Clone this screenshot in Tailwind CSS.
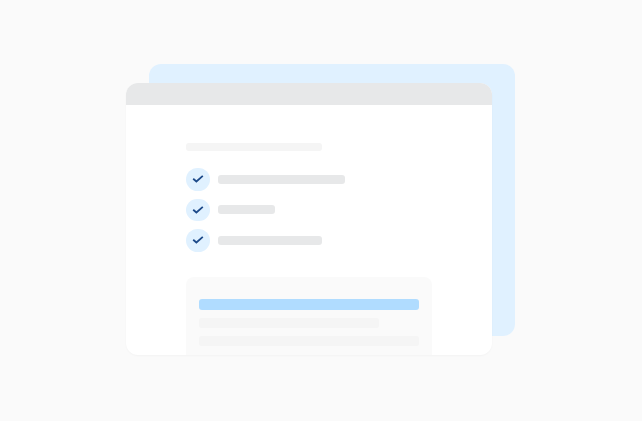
<!doctype html>
<html>
<head>
<meta charset="utf-8">
<script src="https://cdn.jsdelivr.net/npm/@tailwindcss/browser@4"></script>
</head>
<body class="bg-[#fafafa]">
<main class="relative h-[421px] w-[642px] overflow-hidden bg-[#fafafa]">
  <div class="absolute left-[149px] top-[64px] h-[272px] w-[366px] rounded-[12px] bg-[#e0f1ff]"></div>
  <div class="absolute left-[126px] top-[83px] flex h-[271.5px] w-[366px] flex-col overflow-hidden rounded-[12px] bg-white shadow-[0_1px_2px_rgba(0,0,0,0.03)]">
    <div class="h-[22px] shrink-0 bg-[#e7e8e9]"></div>
    <div class="flex flex-col pl-[60px] pt-[38px]">
      <div class="h-[8px] w-[136px] rounded-[3px] bg-[#f5f5f5]"></div>
      <ul class="mt-[16.8px] flex flex-col gap-[7.5px]">
        <li class="flex h-[23px] items-center gap-[8px]">
          <span class="flex h-[22.6px] w-[24px] items-center justify-center rounded-full bg-[#e0f1ff]">
            <svg class="h-[12px] w-[12px]" viewBox="0 0 12 12" fill="none"><path d="M1.2 5.7 4.4 8.5 10.8 2.9" stroke="#1d4a8a" stroke-width="1.8"/></svg>
          </span>
          <span class="h-[9px] w-[127px] rounded-[3px] bg-[#e7e8e9]"></span>
        </li>
        <li class="flex h-[23px] items-center gap-[8px]">
          <span class="flex h-[22.6px] w-[24px] items-center justify-center rounded-full bg-[#e0f1ff]">
            <svg class="h-[12px] w-[12px]" viewBox="0 0 12 12" fill="none"><path d="M1.2 5.7 4.4 8.5 10.8 2.9" stroke="#1d4a8a" stroke-width="1.8"/></svg>
          </span>
          <span class="h-[9px] w-[57px] rounded-[3px] bg-[#e7e8e9]"></span>
        </li>
        <li class="flex h-[23px] items-center gap-[8px]">
          <span class="flex h-[22.6px] w-[24px] items-center justify-center rounded-full bg-[#e0f1ff]">
            <svg class="h-[12px] w-[12px]" viewBox="0 0 12 12" fill="none"><path d="M1.2 5.7 4.4 8.5 10.8 2.9" stroke="#1d4a8a" stroke-width="1.8"/></svg>
          </span>
          <span class="h-[9px] w-[104px] rounded-[3px] bg-[#e7e8e9]"></span>
        </li>
      </ul>
      <div class="mt-[25.2px] flex h-[90px] w-[246px] flex-col gap-[8px] rounded-[8px] bg-[#fafafa] px-[13px] pt-[22.5px]">
        <div class="h-[10.5px] w-[220px] rounded-[3px] bg-[#b0dcff]"></div>
        <div class="h-[10px] w-[180px] rounded-[3px] bg-[#f5f5f5]"></div>
        <div class="h-[10.5px] w-[220px] rounded-[3px] bg-[#f5f5f5]"></div>
      </div>
    </div>
  </div>
</main>
</body>
</html>
